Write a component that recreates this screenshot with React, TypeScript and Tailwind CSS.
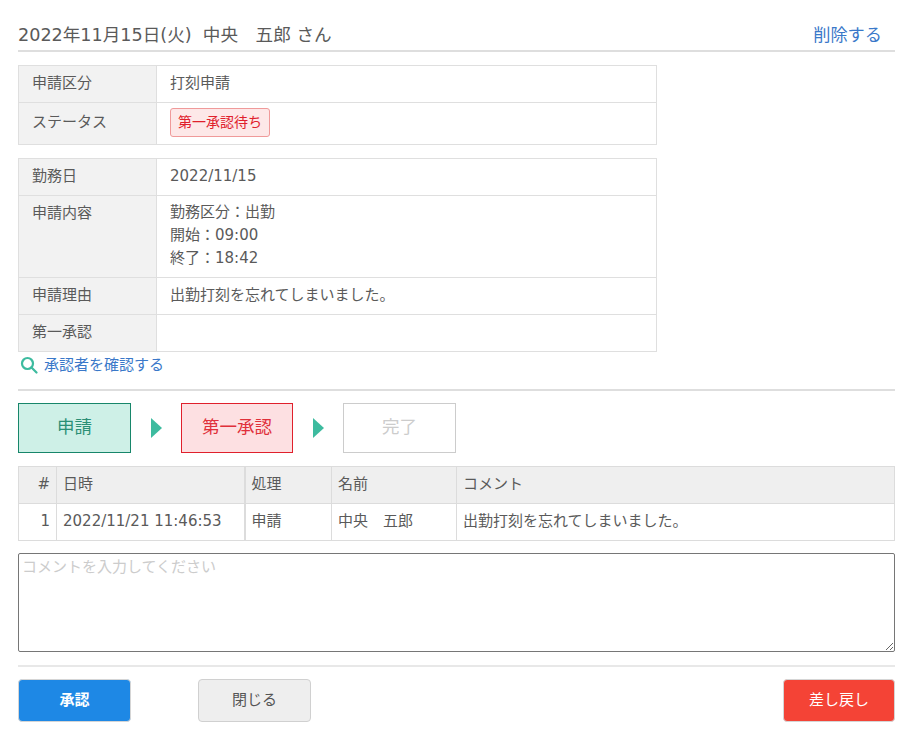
const font = "[font-family:'DejaVu_Sans','Noto_Sans_CJK_JP',sans-serif]";

function InfoRow({ label, children, className = "", top = false }: { label: string; children?: React.ReactNode; className?: string; top?: boolean }) {
  return (
    <tr className={className}>
      <th className={`w-[138px] border border-[#dfdfdf] bg-[#f2f2f2] py-0 pl-[13px] text-left font-normal ${top ? "align-top pt-[6px]" : "align-middle pb-[2px]"}`}>
        {label}
      </th>
      <td className={`border border-[#dfdfdf] py-0 pl-[13px] ${top ? "align-top pt-[5px]" : "align-middle pb-[2px]"}`}>{children}</td>
    </tr>
  );
}

function Step({ label, className }: { label: string; className: string }) {
  return (
    <div className={`flex h-[50px] items-center justify-center border pb-[2px] text-[17.5px] ${className}`}>{label}</div>
  );
}

function Arrow() {
  return (
    <svg width="50" height="20" viewBox="0 0 50 20" className="shrink-0">
      <polygon points="20,0 31,10 20,20" fill="#3dbb9f" />
    </svg>
  );
}

const th = "border border-[#dcdcdc] bg-[#efefef] px-[6px] pb-[2px] text-left font-normal";
const td = "border border-[#dcdcdc] px-[6px] pb-[2px]";

export default function App() {
  return (
    <div className={`${font} h-[746px] w-[912px] bg-white px-[18px] pr-[17px] pt-[22px] text-[15px] text-[#5a5a5a]`}>
      <div className="flex h-[30px] items-center justify-between border-b-2 border-[#dedede] pb-[1px] text-[17.6px]">
        <span>2022年11月15日(火)&nbsp;&nbsp;中央　五郎 さん</span>
        <a className="pr-[13px] text-[17.2px] text-[#3a78c9]">削除する</a>
      </div>

      <table className="mt-[13px] w-[639px] table-fixed border-collapse">
        <tbody>
          <InfoRow label="申請区分" className="h-[37px]">
            打刻申請
          </InfoRow>
          <InfoRow label="ステータス" className="h-[42px]">
            <span className="inline-block h-[29px] rounded-[3px] border border-[#f09a9a] bg-[#fde8e8] px-[7px] text-[14px] leading-[26px] text-[#e0202c]">
              第一承認待ち
            </span>
          </InfoRow>
        </tbody>
      </table>

      <table className="mt-[13px] w-[639px] table-fixed border-collapse">
        <tbody>
          <InfoRow label="勤務日" className="h-[37px]">
            2022/11/15
          </InfoRow>
          <InfoRow label="申請内容" className="h-[82px]" top>
            <div className="leading-[23px]">
              <div>勤務区分：出勤</div>
              <div>開始：09:00</div>
              <div>終了：18:42</div>
            </div>
          </InfoRow>
          <InfoRow label="申請理由" className="h-[37px]">
            出勤打刻を忘れてしまいました。
          </InfoRow>
          <InfoRow label="第一承認" className="h-[37px]" />
        </tbody>
      </table>

      <div className="mt-[2px] flex h-[22px] items-center gap-[6px] pl-[2px] text-[15px] text-[#3a78c9]">
        <svg width="18" height="18" viewBox="0 0 18 18" fill="none" stroke="#3dbb9f" strokeWidth="2.2">
          <circle cx="7.5" cy="7.5" r="5.5" />
          <path d="M11.5 11.5 L16.5 16.5" strokeLinecap="round" />
        </svg>
        <span>承認者を確認する</span>
      </div>

      <div className="mt-[13px] border-t-2 border-[#dedede]" />

      <div className="mt-[12px] flex items-center">
        <Step label="申請" className="w-[113px] border-[#17866a] bg-[#cef0e7] text-[#2a8f75]" />
        <Arrow />
        <Step label="第一承認" className="w-[112px] border-[#e0202c] bg-[#fde0e2] text-[#e0303a]" />
        <Arrow />
        <Step label="完了" className="w-[113px] border-[#ccc] bg-white text-[#ccc]" />
      </div>

      <table className="mt-[13px] w-[877px] table-fixed border-collapse">
        <colgroup>
          <col className="w-[38px]" />
          <col className="w-[188px]" />
          <col className="w-[87px]" />
          <col className="w-[125px]" />
          <col />
        </colgroup>
        <thead>
          <tr className="h-[37px]">
            <th className={`${th} text-right`}>#</th>
            <th className={`${th} border-r-2`}>日時</th>
            <th className={th}>処理</th>
            <th className={th}>名前</th>
            <th className={th}>コメント</th>
          </tr>
        </thead>
        <tbody>
          <tr className="h-[37px]">
            <td className={`${td} text-right`}>1</td>
            <td className={`${td} border-r-2`}>2022/11/21 11:46:53</td>
            <td className={td}>申請</td>
            <td className={td}>中央　五郎</td>
            <td className={td}>出勤打刻を忘れてしまいました。</td>
          </tr>
        </tbody>
      </table>

      <textarea
        className="mt-[12px] block h-[99px] w-[877px] rounded-[2px] border border-[#767676] px-[3px] py-[2px] text-[15px] outline-none placeholder:text-[#ccc]"
        placeholder="コメントを入力してください"
      />

      <div className="mt-[13px] border-t-2 border-[#e8e8e8]" />

      <div className="mt-[12px] flex text-[15px]">
        <button className="h-[43px] w-[113px] rounded-[4px] border border-[#d5d5d5] bg-[#1e88e5] font-bold text-white">承認</button>
        <button className="ml-[67px] h-[43px] w-[113px] rounded-[4px] border border-[#d0d0d0] bg-[#eeeeee] text-[#555]">閉じる</button>
        <button className="ml-auto h-[43px] w-[112px] rounded-[4px] border border-[#d5d5d5] bg-[#f44336] text-white">差し戻し</button>
      </div>
    </div>
  );
}
